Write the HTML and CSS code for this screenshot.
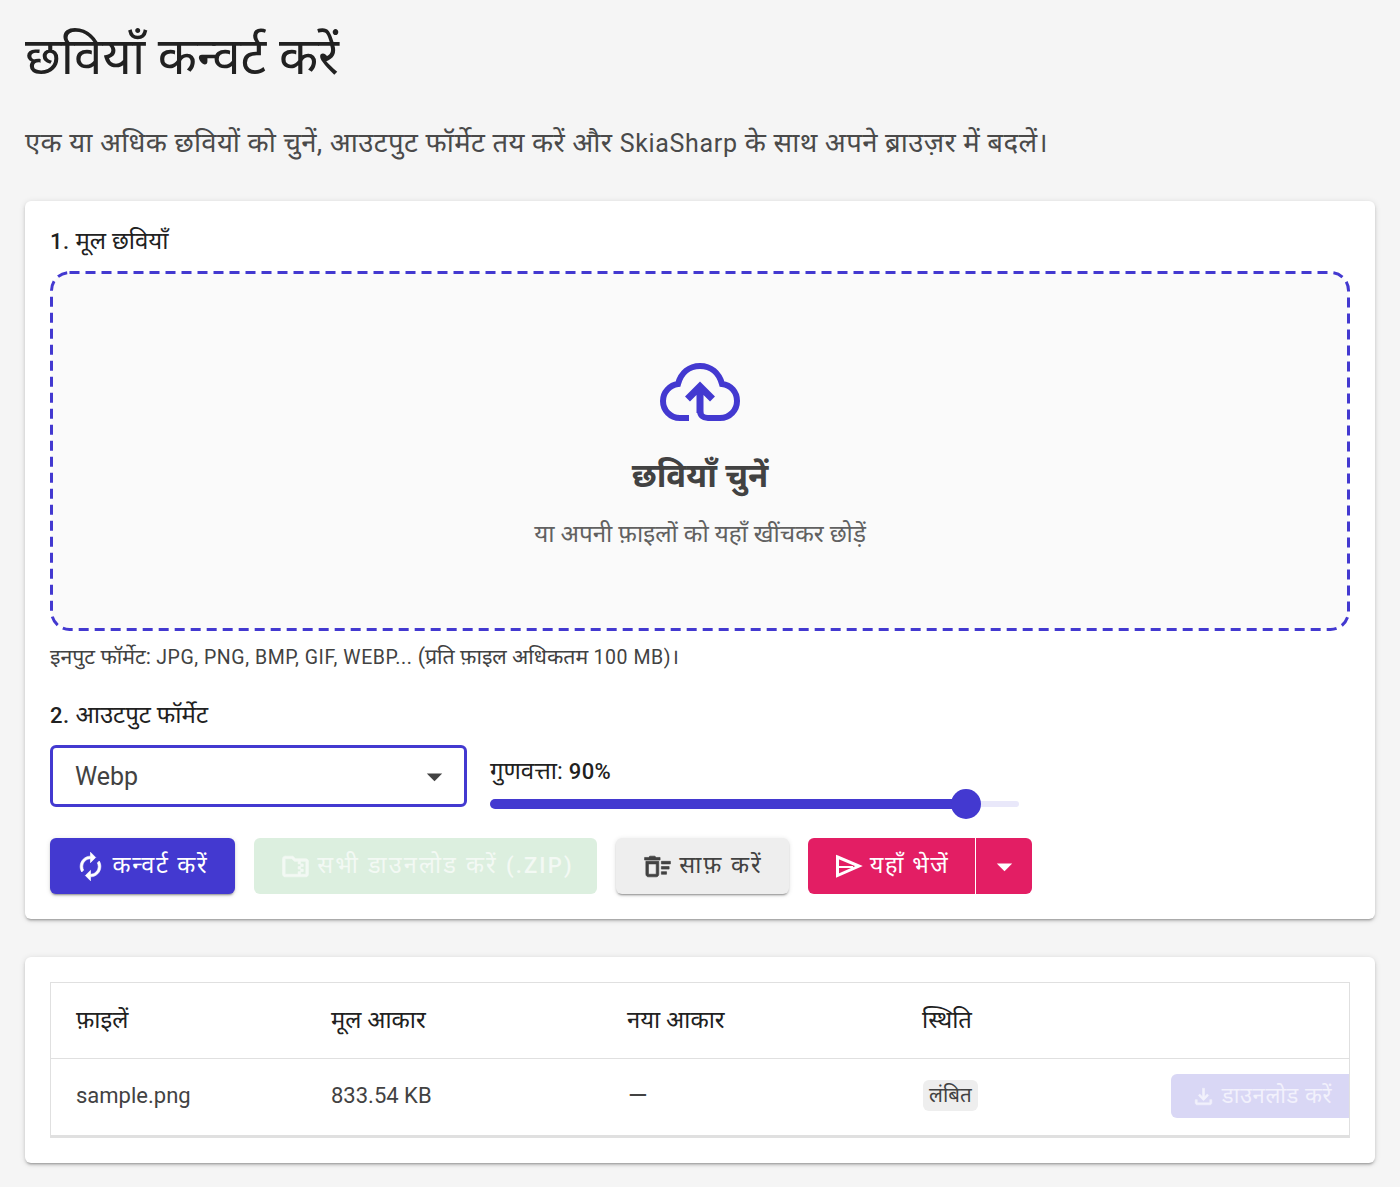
FILE: index.html
```html
<!DOCTYPE html>
<html lang="hi">
<head>
<meta charset="utf-8">
<title>छवियाँ कन्वर्ट करें</title>
<link rel="stylesheet" href="styles.css">
</head>
<body>
<main class="page">
  <h1 class="title">छवियाँ कन्वर्ट करें</h1>
  <p class="subtitle">एक या अधिक छवियों को चुनें, आउटपुट फॉर्मेट तय करें और <span class="lat">SkiaSharp</span> के साथ अपने ब्राउज़र में बदलें।</p>

  <section class="card">
    <h2 class="label"><span class="num">1.</span> मूल छवियाँ</h2>
    <div class="drop">
      <svg class="drop-border" viewBox="0 0 1300 360" width="1300" height="360" aria-hidden="true">
        <rect x="1.500" y="1.500" width="1297" height="357" rx="18" fill="#fafafa" stroke="#4339d0" stroke-width="3" stroke-dasharray="10 6"/>
      </svg>
      <svg class="cloud" viewBox="0 0 80 58" width="80" height="58" aria-hidden="true">
        <path d="M29 55H20C10 55 3 47 3 38C3 29 10 22 18 21C21 10 29 3 40 3C51 3 59 10 62 21C71 22 77 29 77 38C77 47 70 55 60 55H48C43 55 40 52 40 48" fill="none" stroke="currentColor" stroke-width="6"/>
        <path d="M40 50V24M27.500 36L40 23.500L52.500 36" fill="none" stroke="currentColor" stroke-width="7"/>
      </svg>
      <div class="drop-title">छवियाँ चुनें</div>
      <div class="drop-sub">या अपनी फ़ाइलों को यहाँ खींचकर छोड़ें</div>
    </div>
    <p class="caption">इनपुट फॉर्मेट: <span class="lat">JPG, PNG, BMP, GIF, WEBP...</span> (प्रति फ़ाइल अधिकतम <span class="lat">100 MB)</span>।</p>

    <h2 class="label label-second"><span class="num">2.</span> आउटपुट फॉर्मेट</h2>
    <div class="format-row">
      <div class="select">
        <span>Webp</span>
        <svg class="caret" viewBox="0 0 24 24" width="37" height="37" aria-hidden="true"><path d="M7 10l5 5 5-5z"/></svg>
      </div>
      <div class="quality">
        <div class="quality-label">गुणवत्ता: <span class="num">90%</span></div>
        <div class="slider">
          <div class="slider-fill"></div>
          <div class="slider-thumb"></div>
        </div>
      </div>
    </div>

    <div class="actions">
      <button class="btn btn-primary">
        <svg class="bold" viewBox="0 0 24 24" width="31" height="31" aria-hidden="true"><path d="M12 6v3l4-4-4-4v3c-4.420 0-8 3.580-8 8 0 1.570.460 3.030 1.240 4.260L6.700 14.800c-.450-.830-.700-1.790-.700-2.800 0-3.310 2.690-6 6-6zm6.760 1.740L17.300 9.200c.440.840.700 1.790.700 2.800 0 3.310-2.690 6-6 6v-3l-4 4 4 4v-3c4.420 0 8-3.580 8-8 0-1.570-.460-3.030-1.240-4.260z"/></svg>
        <span>कन्वर्ट करें</span>
      </button>
      <button class="btn btn-zip">
        <svg class="bold" viewBox="0 0 24 24" width="31" height="31" aria-hidden="true"><path d="M20 6h-8l-2-2H4c-1.100 0-1.990.900-1.990 2L2 18c0 1.100.900 2 2 2h16c1.100 0 2-.900 2-2V8c0-1.100-.900-2-2-2zm-4 10h2v-2h-2v-2h2v-2h-2V8h4v10h-4v-2zm0 0h-2v2H4V6h5.170l2 2H14v2h2v2h-2v2h2v2z"/></svg>
        <span>सभी डाउनलोड करें <span class="btn-lat">(.ZIP)</span></span>
      </button>
      <button class="btn btn-clear">
        <svg class="bold" viewBox="0 0 24 24" width="31" height="31" aria-hidden="true"><path d="M15 16h4v2h-4zm0-8h7v2h-7zm0 4h6v2h-6zM3 18c0 1.100.900 2 2 2h6c1.100 0 2-.900 2-2V8H3v10zm2-8h6v8H5v-8zm5-6H6L5 5H2v2h12V5h-3z"/></svg>
        <span>साफ़ करें</span>
      </button>
      <div class="split">
        <button class="btn btn-send">
          <svg class="send" viewBox="0 0 31 31" width="31" height="31" aria-hidden="true"><path d="M4.500 6L26 15L4.500 24.500Z" fill="none" stroke="currentColor" stroke-width="3"/><path d="M5 16H20" fill="none" stroke="currentColor" stroke-width="2"/></svg>
          <span>यहाँ भेजें</span>
        </button>
        <button class="btn btn-send-more" aria-label="more">
          <svg viewBox="0 0 24 24" width="37" height="37" aria-hidden="true"><path d="M7 10l5 5 5-5z"/></svg>
        </button>
      </div>
    </div>
  </section>

  <section class="card card-table">
    <table class="files">
      <thead>
        <tr><th class="col-name">फ़ाइलें</th><th class="col-size">मूल आकार</th><th class="col-new">नया आकार</th><th class="col-status">स्थिति</th><th></th></tr>
      </thead>
      <tbody>
        <tr>
          <td>sample.png</td>
          <td>833.54 KB</td>
          <td><span class="dash">—</span></td>
          <td><span class="chip">लंबित</span></td>
          <td class="cell-action">
            <button class="btn btn-download">
              <svg class="bold" viewBox="0 0 24 24" width="25" height="25" aria-hidden="true"><path d="M18 15v3H6v-3H4v3c0 1.100.900 2 2 2h12c1.100 0 2-.900 2-2v-3h-2zm-1-4l-1.410-1.410L13 12.170V4h-2v8.170L8.410 9.590 7 11l5 5 5-5z"/></svg>
              <span>डाउनलोड करें</span>
            </button>
          </td>
        </tr>
      </tbody>
    </table>
  </section>
</main>
</body>
</html>
```
FILE: styles.css
```css
* { box-sizing: border-box; }
html, body { margin: 0; padding: 0; }
body {
  background: #f5f5f5;
  color: #212121;
  font-family: Roboto, "Noto Sans", sans-serif;
  font-size: 22px;
}
.page { padding: 0 25px 25px; }
.title {
  margin: 0;
  padding-top: 17px;
  height: 94px;
  font-size: 51px;
  line-height: 80px;
  font-weight: 400;
}
.subtitle {
  margin: 0;
  padding-top: 27px;
  font-size: 27.500px;
  line-height: 44px;
  font-weight: 400;
  letter-spacing: .38px;
  color: #4a4a4a;
  height: 107px;
}
.subtitle .lat { font-size: 25px; letter-spacing: .67px; }
.card {
  background: #fff;
  border-radius: 6px;
  box-shadow: 0 3px 2px -2px rgba(0,0,0,.2), 0 2px 3px 0 rgba(0,0,0,.14), 0 1px 6px 0 rgba(0,0,0,.12);
  padding: 25px;
}
.label {
  margin: 0;
  height: 30px;
  font-size: 24px;
  line-height: 30px;
  font-weight: 400;
}
.num { font-size: 22px; font-weight: 500; letter-spacing: .4px; }
.drop {
  position: relative;
  margin-top: 15px;
  height: 360px;
  display: flex;
  flex-direction: column;
  align-items: center;
  padding-top: 92px;
}
.drop-border { position: absolute; left: 0; top: 0; display: block; }
.cloud { position: relative; color: #4339d0; display: block; }
.drop-title {
  position: relative;
  margin-top: 30px;
  font-size: 33px;
  line-height: 50px;
  font-weight: 700;
  color: #424242;
}
.drop-sub {
  position: relative;
  margin-top: 13px;
  font-size: 24.200px;
  line-height: 40px;
  font-weight: 400;
  color: #616161;
}
.caption {
  margin: 12px 0 0;
  height: 28px;
  font-size: 21.300px;
  line-height: 28px;
  color: #424242;
}
.caption .lat { font-size: 19.500px; letter-spacing: .55px; }
.label-second { margin-top: 29px; }
.format-row {
  display: flex;
  gap: 23px;
  margin-top: 15px;
  align-items: flex-start;
}
.select {
  width: 417px;
  height: 62px;
  border: 3px solid #4339d0;
  border-radius: 6px;
  display: flex;
  align-items: center;
  justify-content: space-between;
  padding: 0 11px 0 22px;
  font-size: 25px;
  color: #424242;
}
.caret { fill: #424242; display: block; }
.quality { width: 529px; }
.quality-label { height: 30px; font-size: 24px; line-height: 30px; margin-top: 11px; }
.slider {
  position: relative;
  height: 6px;
  margin-top: 15px;
  background: #e9e8fa;
  border-radius: 3px;
}
.slider-fill {
  position: absolute;
  left: 0; top: -2px;
  width: 90%;
  height: 10px;
  background: #4339d0;
  border-radius: 5px;
}
.slider-thumb {
  position: absolute;
  left: calc(90% - 15px);
  top: -12px;
  width: 30px;
  height: 30px;
  border-radius: 50%;
  background: #4339d0;
}
.actions {
  display: flex;
  gap: 19px;
  margin-top: 31px;
  align-items: flex-start;
}
.btn {
  display: inline-flex;
  align-items: center;
  justify-content: center;
  gap: 6px;
  height: 56px;
  border: 0;
  border-radius: 6px;
  padding: 0 26px 0 25px;
  font-family: inherit;
  font-size: 23.500px;
  font-weight: 400;
  letter-spacing: 1.600px;
  white-space: nowrap;
  line-height: 1;
}
.btn-lat { font-size: 22px; font-weight: 500; }
.btn svg { fill: currentColor; display: block; flex: none; }
.btn svg.bold { stroke: currentColor; stroke-width: .5px; }
.btn svg.send { fill: none; }
.btn-primary {
  width: 185px;
  background: #4339d0;
  color: #fff;
  letter-spacing: 1.800px;
  box-shadow: 0 3px 1px -2px rgba(0,0,0,.2), 0 2px 2px 0 rgba(0,0,0,.14), 0 1px 5px 0 rgba(0,0,0,.12);
}
.btn-zip { width: 343px; background: #dcefdf; color: #f3f9f4; letter-spacing: 2.150px; padding-right: 22px; }
.btn-clear {
  width: 173px;
  background: #eeeeee;
  color: #424242;
  letter-spacing: 1.950px;
  padding-right: 25px;
  box-shadow: 0 3px 1px -2px rgba(0,0,0,.2), 0 2px 2px 0 rgba(0,0,0,.14), 0 1px 5px 0 rgba(0,0,0,.12);
}
.split { display: flex; gap: 1px; }
.btn-send { width: 167px; background: #e31e64; color: #fff; border-radius: 6px 0 0 6px; letter-spacing: 1.500px; }
.btn-send-more { background: #e31e64; color: #fff; border-radius: 0 6px 6px 0; width: 56px; padding: 0; }
.card-table { margin-top: 38px; }
.files {
  width: 100%;
  table-layout: fixed;
  border-collapse: separate;
  border-spacing: 0;
  border: 1px solid #e0e0e0;
  border-bottom-width: 3px;
}
.files th, .files td {
  height: 76px;
  padding: 0 0 4px 25px;
  text-align: left;
  font-size: 22px;
  font-weight: 400;
  color: #424242;
}
.files th { color: #212121; border-bottom: 1px solid #e0e0e0; font-size: 23.800px; }
.col-name { width: 255px; }
.col-size { width: 296px; }
.col-new { width: 295px; }
.col-status { width: 249px; }
.dash { font-size: 25px; margin-left: 1px; }
.chip {
  display: inline-block;
  margin-left: 1px;
  background: #eeeeee;
  border-radius: 6px;
  padding: 0 6px;
  font-size: 20.500px;
  line-height: 31px;
  vertical-align: -1px;
}
.files .cell-action { padding: 2px 0 4px; overflow: visible; text-align: right; }
.btn-download {
  height: 44px;
  width: 178px;
  background: #d9d7f5;
  color: #f2f1fc;
  border-radius: 6px 0 0 6px;
  padding: 0 0 0 3px;
  vertical-align: middle;
  font-size: 22px;
  font-weight: 400;
  letter-spacing: .6px;
}
```
